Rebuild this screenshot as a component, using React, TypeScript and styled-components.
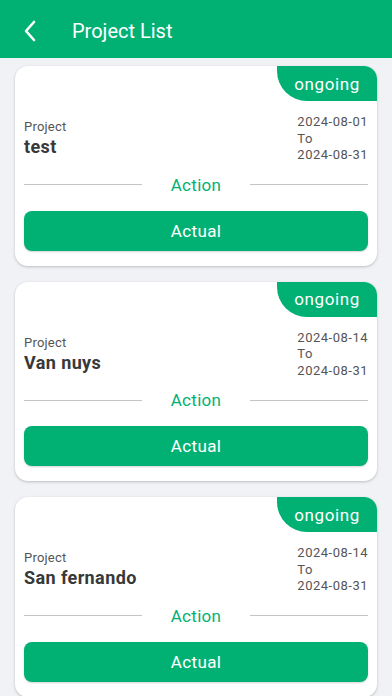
import React, { FC } from 'react';
import styled, { createGlobalStyle } from 'styled-components';

const GREEN = '#01b174';

const GlobalStyle = createGlobalStyle`
  html, body {
    margin: 0;
    padding: 0;
    background: #f1f2f6;
    font-family: Roboto, 'Liberation Sans', sans-serif;
  }
`;

const Page = styled.div`
  min-height: 696px;
  background: #f1f2f6;
`;

const Header = styled.header`
  align-items: center;
  background: ${GREEN};
  box-sizing: border-box;
  color: #fff;
  display: flex;
  height: 58px;
  padding: 4px 0 0 18px;
`;

const BackButton = styled.button`
  align-items: center;
  background: none;
  border: 0;
  display: flex;
  height: 28px;
  justify-content: center;
  margin: 0 30px 0 0;
  padding: 0;
  width: 24px;
`;

const Title = styled.h1`
  font-size: 20px;
  font-weight: 400;
  margin: 0;
`;

const List = styled.div`
  display: flex;
  flex-direction: column;
  gap: 16px;
  padding: 8px 15px 16px;
`;

const Card = styled.div`
  background: #fff;
  border-radius: 13px;
  box-shadow: 0 1px 3px rgba(0, 0, 0, 0.22);
  overflow: hidden;
  padding: 0 9px 15px;
`;

const TopRow = styled.div`
  display: flex;
  justify-content: flex-end;
  margin: 0 -9px 0 0;
`;

const Badge = styled.span`
  align-items: center;
  background: ${GREEN};
  border-bottom-left-radius: 30px;
  color: #fff;
  display: flex;
  font-size: 17px;
  height: 35px;
  justify-content: center;
  letter-spacing: 0.6px;
  width: 100px;
`;

const InfoRow = styled.div`
  align-items: center;
  display: flex;
  justify-content: space-between;
  margin: 13px 0 0;
`;

const Label = styled.div`
  color: #555;
  font-size: 13px;
  letter-spacing: 0.2px;
  line-height: 17px;
`;

const Name = styled.div`
  color: #383838;
  font-size: 18px;
  font-weight: 700;
  letter-spacing: 0.4px;
  line-height: 24px;
`;

const Dates = styled.div`
  color: #555;
  font-size: 13px;
  letter-spacing: 0.5px;
  line-height: 16.5px;
`;

const Divider = styled.div`
  align-items: center;
  display: flex;
  height: 24px;
  margin: 9px 0 0;

  &::before,
  &::after {
    background: #c4c4c4;
    content: '';
    flex: 1;
    height: 1px;
  }
`;

const DividerText = styled.span`
  color: ${GREEN};
  font-size: 17px;
  letter-spacing: 0.3px;
  margin: 0 29px;
`;

const ActionButton = styled.button`
  background: ${GREEN};
  border: 0;
  border-radius: 8px;
  box-shadow: 0 1px 2px rgba(0, 0, 0, 0.18);
  color: #fff;
  display: block;
  font-family: inherit;
  font-size: 17px;
  height: 40px;
  letter-spacing: 0.4px;
  margin: 14px 0 0;
  width: 100%;
`;

const projects = [
  { name: 'test', start: '2024-08-01', end: '2024-08-31' },
  { name: 'Van nuys', start: '2024-08-14', end: '2024-08-31' },
  { name: 'San fernando', start: '2024-08-14', end: '2024-08-31' },
];

const ProjectCard: FC<any> = ({ name, start, end }) => (
  <Card>
    <TopRow>
      <Badge>ongoing</Badge>
    </TopRow>
    <InfoRow>
      <div>
        <Label>Project</Label>
        <Name>{name}</Name>
      </div>
      <Dates>
        <div>{start}</div>
        <div>To</div>
        <div>{end}</div>
      </Dates>
    </InfoRow>
    <Divider>
      <DividerText>Action</DividerText>
    </Divider>
    <ActionButton>Actual</ActionButton>
  </Card>
);

const App: FC = () => (
  <Page>
    <GlobalStyle />
    <Header>
      <BackButton aria-label="back">
        <svg width="14" height="22" viewBox="0 0 14 22" fill="none">
          <path d="M11 2 L3 11 L11 20" stroke="#fff" strokeWidth="2.6" strokeLinecap="round" strokeLinejoin="round" />
        </svg>
      </BackButton>
      <Title>Project List</Title>
    </Header>
    <List>
      {projects.map((p) => (
        <ProjectCard key={p.name} {...p} />
      ))}
    </List>
  </Page>
);

export default App;
